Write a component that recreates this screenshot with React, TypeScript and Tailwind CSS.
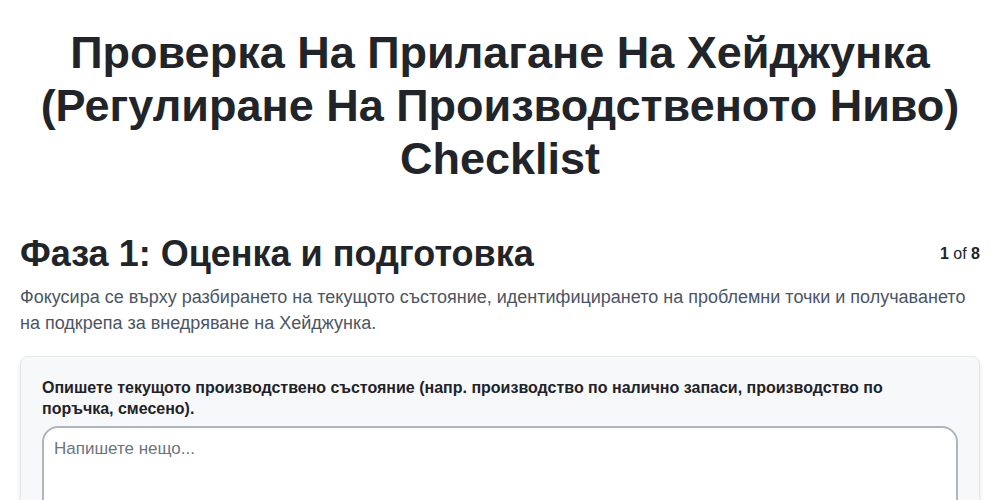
import React from 'react';

export default function App() {
  return (
    <div className="min-h-screen bg-white px-5 text-[#212529]" style={{ fontFamily: '"Liberation Sans", Arial, sans-serif' }}>
      <h1 className="pt-[26px] text-center text-[45px] font-bold leading-[53px]">
        Проверка На Прилагане На Хейджунка (Регулиране На Производственото Ниво) Checklist
      </h1>

      <div className="mt-[47px] flex items-start justify-between">
        <h2 className="text-[36px] font-bold leading-[44px]">Фаза 1: Оценка и подготовка</h2>
        <div className="pt-[10px] text-base">
          <span className="font-bold">1</span> of <span className="font-bold">8</span>
        </div>
      </div>
      <p className="mt-[8px] text-lg leading-[26px] text-[#4b5563]">
        Фокусира се върху разбирането на текущото състояние, идентифицирането на проблемни точки и получаването на подкрепа за внедряване на Хейджунка.
      </p>

      <div className="mt-[20px] rounded-lg border border-[#e5e7eb] bg-[#f7f8fa] px-[21px] pt-5 pb-5 shadow-md">
        <label className="block text-base font-bold leading-[21px] text-[#1f2328]">
          Опишете текущото производствено състояние (напр. производство по налично запаси, производство по поръчка, смесено).
        </label>
        <textarea
          className="mt-[7px] block h-[120px] w-full resize-none rounded-2xl border-2 border-[#adb5bd] bg-white px-[10px] py-2 text-[17px] text-[#212529] placeholder:text-[#6c757d] focus:outline-none"
          placeholder="Напишете нещо..."
        />
      </div>
    </div>
  );
}
